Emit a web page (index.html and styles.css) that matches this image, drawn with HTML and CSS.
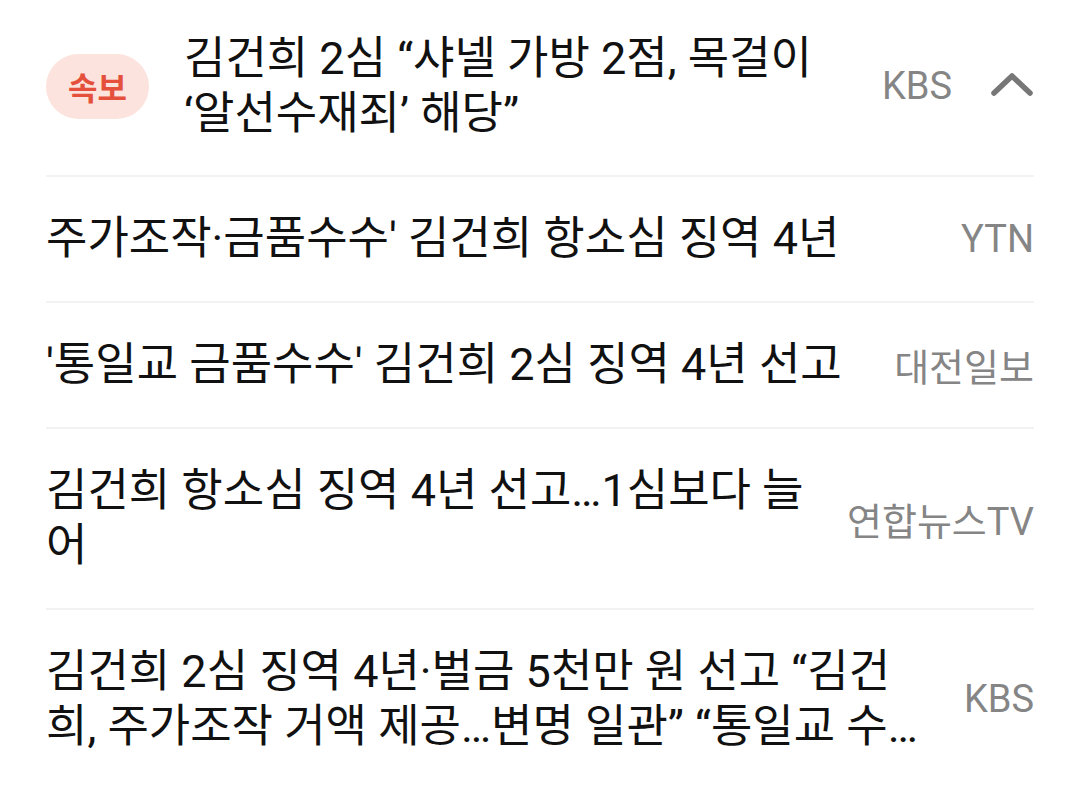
FILE: index.html
```html
<!DOCTYPE html>
<html lang="ko">
<head>
    <meta charset="UTF-8">
    <meta name="viewport" content="width=device-width, initial-scale=1.0">
    <title>속보</title>

    <link rel="stylesheet" href="styles.css">

</head>
<body>
    <ul class="lista-noticias">
        <li class="noticia destaque">
            <span class="selo">속보</span>
            <p class="titulo">김건희 2심 “샤넬 가방 2점, 목걸이 ‘알선수재죄’ 해당”</p>
            <span class="fonte">KBS</span>
            <svg class="seta" width="44" height="26" viewBox="0 0 44 26">
                <path d="M4 22 L22 5 L40 22" fill="none" stroke="#777" stroke-width="5.5" stroke-linecap="round" stroke-linejoin="round"/>
            </svg>
        </li>
        <li class="noticia">
            <p class="titulo">주가조작·금품수수' 김건희 항소심 징역 4년</p>
            <span class="fonte">YTN</span>
        </li>
        <li class="noticia">
            <p class="titulo">'통일교 금품수수' 김건희 2심 징역 4년 선고</p>
            <span class="fonte">대전일보</span>
        </li>
        <li class="noticia">
            <p class="titulo">김건희 항소심 징역 4년 선고…1심보다 늘어</p>
            <span class="fonte">연합뉴스TV</span>
        </li>
        <li class="noticia">
            <p class="titulo">김건희 2심 징역 4년·벌금 5천만 원 선고 “김건희, 주가조작 거액 제공…변명 일관” “통일교 수수 혐의도 유죄”</p>
            <span class="fonte">KBS</span>
        </li>
    </ul>
</body>
</html>
```

FILE: styles.css
```css
body
{
    margin: 0;
    background-color: #fff;
    font-family: Roboto, "Noto Sans CJK KR", sans-serif;
    overflow: hidden;
}
.lista-noticias
{
    list-style: none;
    margin: 0;
    padding: 0 46px;
}
.noticia
{
    display: flex;
    align-items: center;
    gap: 40px;
    padding: 34px 0 35px;
    border-bottom: 2px solid #f2f2f2;
}
.noticia:last-child
{
    border-bottom: none;
}
.noticia.destaque
{
    padding-top: 31px;
    padding-bottom: 34px;
    gap: 0;
}
.titulo
{
    flex: 1;
    margin: 0;
    font-size: 45px;
    line-height: 55px;
    color: #111;
    display: -webkit-box;
    -webkit-line-clamp: 2;
    -webkit-box-orient: vertical;
    overflow: hidden;
}
.destaque .titulo
{
    margin: 0 40px 0 35px;
}
.selo
{
    flex: none;
    width: 103px;
    height: 65px;
    border-radius: 33px;
    background-color: #fde3dd;
    color: #e4503b;
    font-size: 32px;
    font-weight: bold;
    display: flex;
    justify-content: center;
    align-items: center;
}
.fonte
{
    flex: none;
    font-size: 38px;
    color: #858585;
}
.seta
{
    flex: none;
    margin-left: 38px;
    margin-top: -4px;
}
```
